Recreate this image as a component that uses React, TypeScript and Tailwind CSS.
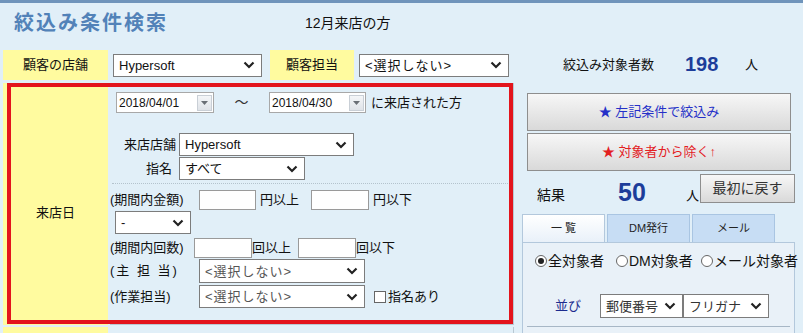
import React from 'react'

const FONT = "font-['Liberation_Sans','Noto_Sans_CJK_JP',sans-serif]"

function Chevron() {
  return (
    <svg width="12" height="8" viewBox="0 0 12 8" className="shrink-0">
      <polyline points="1.5,1.5 6,6 10.5,1.5" fill="none" stroke="#222" strokeWidth="2.2" />
    </svg>
  )
}

function Select({ value, className, textClass = 'text-[13px]' }: { value: string; className: string; textClass?: string }) {
  return (
    <div className={`flex items-center justify-between bg-white border border-[#7c7c7c] pl-[5px] pr-[6px] ${className}`}>
      <span className={`${textClass} text-[#111] leading-none whitespace-nowrap`}>{value}</span>
      <Chevron />
    </div>
  )
}

function DateBox({ value, className }: { value: string; className: string }) {
  return (
    <div className={`flex items-center justify-between bg-white border border-[#a8a8a8] pl-[2px] pr-[1px] h-[21px] ${className}`}>
      <span className="text-[12px] text-[#111]">{value}</span>
      <div className="w-[15px] h-[16px] flex items-center justify-center bg-linear-to-b from-[#f4f6f8] to-[#dfe3e8] border border-[#c9cfd6]">
        <svg width="7" height="4" viewBox="0 0 7 4">
          <polygon points="0,0 7,0 3.5,4" fill="#6a6f75" />
        </svg>
      </div>
    </div>
  )
}

function TextBox({ className }: { className: string }) {
  return <div className={`bg-white border border-[#9a9a9a] h-[20px] ${className}`} />
}

function Radio({ checked, label, className }: { checked?: boolean; label: string; className?: string }) {
  return (
    <div className={`flex items-center shrink-0 whitespace-nowrap ${className ?? ''}`}>
      <span className="shrink-0 w-[12px] h-[12px] rounded-full border border-[#666] bg-white flex items-center justify-center">
        {checked && <span className="w-[6px] h-[6px] rounded-full bg-[#222]" />}
      </span>
      <span className="ml-[1px] text-[14px] text-[#111]">{label}</span>
    </div>
  )
}

const App = () => {
  return (
    <div className={`relative w-[803px] h-[333px] overflow-hidden bg-[#e1eff8] ${FONT}`}>
      {/* 上部バー */}
      <div className="h-[3px] bg-[#6f94bb]" />

      <div className="flex">
        {/* 左側：検索条件 */}
        <div className="w-[517px] shrink-0">
          <div className="h-[47px] flex items-start pt-[8px]">
            <div className="w-[305px] pl-[14px] text-[20px] leading-[24px] tracking-[2px] font-bold text-[#5282b8]">
              絞込み条件検索
            </div>
            <div className="text-[14px] leading-[24px] text-[#111]">12月来店の方</div>
          </div>

          {/* 顧客の店舗 / 顧客担当 */}
          <div className="flex h-[30px] pl-[3px]">
            <div className="w-[105px] bg-[#fffb9f] flex items-center justify-center text-[13px] text-[#111]">顧客の店舗</div>
            <div className="w-[158px] ml-[2px] flex items-center pl-[3px]">
              <Select value="Hypersoft" className="w-[149px] h-[23px]" />
            </div>
            <div className="w-[84px] ml-[2px] bg-[#fffb9f] flex items-center justify-center text-[13px] text-[#111]">顧客担当</div>
            <div className="flex items-center pl-[3px] ml-[2px]">
              <Select value="<選択しない>" className="w-[150px] h-[23px]" textClass="text-[13px] tracking-[1px]" />
            </div>
          </div>

          {/* 来店日 */}
          <div className="flex h-[242px] mt-[3px] pl-[3px]">
            <div className="w-[105px] bg-[#fffb9f] flex items-center justify-center text-[13px] text-[#111] pt-[18px]">来店日</div>
            <div className="flex-1 ml-[2px] mr-[3px] border-r border-b border-[#b9c8d2] flex flex-col text-[13px] text-[#111]">
              <div className="flex items-center mt-[9px] h-[21px]">
                <DateBox value="2018/04/01" className="ml-[6px] w-[98px]" />
                <div className="w-[55px] text-center text-[14px] text-[#333]">～</div>
                <DateBox value="2018/04/30" className="w-[97px]" />
                <span className="ml-[5px] text-[13px]">に来店された方</span>
              </div>

              <div className="flex items-center mt-[20px] h-[23px]">
                <span className="w-[66px] text-right text-[13px]">来店店舗</span>
                <Select value="Hypersoft" className="ml-[3px] w-[175px] h-[23px]" />
              </div>
              <div className="flex items-center mt-[1px] h-[23px]">
                <span className="w-[66px] text-right pr-[4px] text-[13px]">指名</span>
                <Select value="すべて" className="ml-[3px] w-[126px] h-[23px]" />
              </div>

              <div className="mt-[3px] ml-[2px] mr-[5px] border-t border-dotted border-[#b4c3cd]" />

              <div className="flex items-center mt-[5px] h-[21px]">
                <span className="w-[89px] text-[13px]">(期間内金額)</span>
                <TextBox className="w-[57px]" />
                <span className="ml-[4px] w-[51px]">円以上</span>
                <TextBox className="w-[58px]" />
                <span className="ml-[4px]">円以下</span>
              </div>
              <Select value="-" className="mt-[1px] ml-[5px] w-[76px] h-[23px]" />

              <div className="flex items-center mt-[3px] h-[21px]">
                <span className="w-[84px] text-[13px]">(期間内回数)</span>
                <TextBox className="w-[58px]" />
                <span className="w-[46px]">回以上</span>
                <TextBox className="w-[58px]" />
                <span>回以下</span>
              </div>
              <div className="flex items-center mt-[1px] h-[24px]">
                <span className="w-[89px] text-[13px] tracking-[2px] whitespace-pre">(主 担 当)</span>
                <Select value="<選択しない>" className="w-[166px] h-[24px]" textClass="text-[13px] tracking-[1px] text-[#555]" />
              </div>
              <div className="flex items-center mt-[2px] h-[23px]">
                <span className="w-[89px] text-[13px]">(作業担当)</span>
                <Select value="<選択しない>" className="w-[166px] h-[23px]" textClass="text-[13px] tracking-[1px] text-[#555]" />
                <span className="ml-[9px] w-[12px] h-[12px] border border-[#666] bg-white" />
                <span className="ml-[2px] text-[13px]">指名あり</span>
              </div>
            </div>
          </div>

          <div className="flex h-[20px] mt-[2px] pl-[3px]">
            <div className="w-[105px] bg-[#fffb9f]" />
            <div className="flex-1 ml-[2px] mr-[3px] border-r border-[#b9c8d2]" />
          </div>
        </div>

        {/* 右側：結果 */}
        <div className="flex-1">
          <div className="h-[47px]" />
          <div className="flex items-center h-[30px] text-[#111]">
            <span className="ml-[46px] w-[122px] text-[13px]">絞込み対象者数</span>
            <span className="text-[20px] font-bold text-[#1d3d9a] w-[60px] -mt-[3px]">198</span>
            <span className="text-[13px]">人</span>
          </div>

          <button className="mt-[13px] ml-[10px] w-[264px] h-[38px] border border-[#8e8e8e] bg-linear-to-b from-[#f7f7f7] to-[#d9d9d9] text-[13px] text-[#2530c8] flex items-center justify-center">
            ★ 左記条件で絞込み
          </button>
          <button className="mt-[2px] ml-[10px] w-[264px] h-[38px] border border-[#8e8e8e] bg-linear-to-b from-[#f7f7f7] to-[#d9d9d9] text-[13px] text-[#e3201f] flex items-center justify-center">
            ★ 対象者から除く↑
          </button>

          <div className="flex items-center h-[43px] text-[#111]">
            <span className="ml-[20px] w-[81px] text-[14px] mt-[5px]">結果</span>
            <span className="w-[68px] text-[25px] font-bold text-[#1d3d9a] leading-none">50</span>
            <span className="w-[14px] text-[13px] mt-[7px]">人</span>
            <button className="w-[95px] h-[29px] -mt-[9px] border border-[#8e8e8e] bg-linear-to-b from-[#f7f7f7] to-[#d9d9d9] text-[14px] text-[#333]">
              最初に戻す
            </button>
          </div>

          {/* タブ */}
          <div className="ml-[5px] w-[273px]">
            <div className="flex h-[28px] text-[11px] text-[#222]">
              <div className="w-[83px] bg-linear-to-b from-[#ffffff] to-[#e9f1f9] border border-b-0 border-[#b3c8dc] flex items-center justify-center">一 覧</div>
              <div className="w-[83px] ml-[2px] bg-[#c7ddf4] border border-b-0 border-[#a9c5e2] flex items-center justify-center">DM発行</div>
              <div className="w-[83px] ml-[2px] bg-[#c7ddf4] border border-b-0 border-[#a9c5e2] flex items-center justify-center">メール</div>
            </div>
            <div className="h-[100px] bg-[#e9f1f8] border border-[#b3c8dc] flex flex-col">
              <div className="flex items-center mt-[9px] h-[18px]">
                <Radio checked label="全対象者" className="ml-[12px] w-[81px]" />
                <Radio label="DM対象者" className="w-[85px]" />
                <Radio label="メール対象者" />
              </div>
              <div className="flex items-center mt-[24px] h-[24px]">
                <span className="ml-[32px] w-[45px] text-[13px] text-[#1c2b8e]">並び</span>
                <Select value="郵便番号" className="w-[83px] h-[24px]" textClass="text-[13px] text-[#333]" />
                <Select value="フリガナ" className="w-[86px] h-[24px]" textClass="text-[13px] text-[#333]" />
              </div>
              <div className="mt-[8px] mx-[4px] border-t border-[#a7b7c6]" />
            </div>
          </div>
        </div>
      </div>

      {/* 赤枠（強調） */}
      <div className="absolute left-[7px] top-[83px] w-[506px] h-[241px] border-[4px] border-[#e3141c] pointer-events-none" />
    </div>
  )
}

export default App
